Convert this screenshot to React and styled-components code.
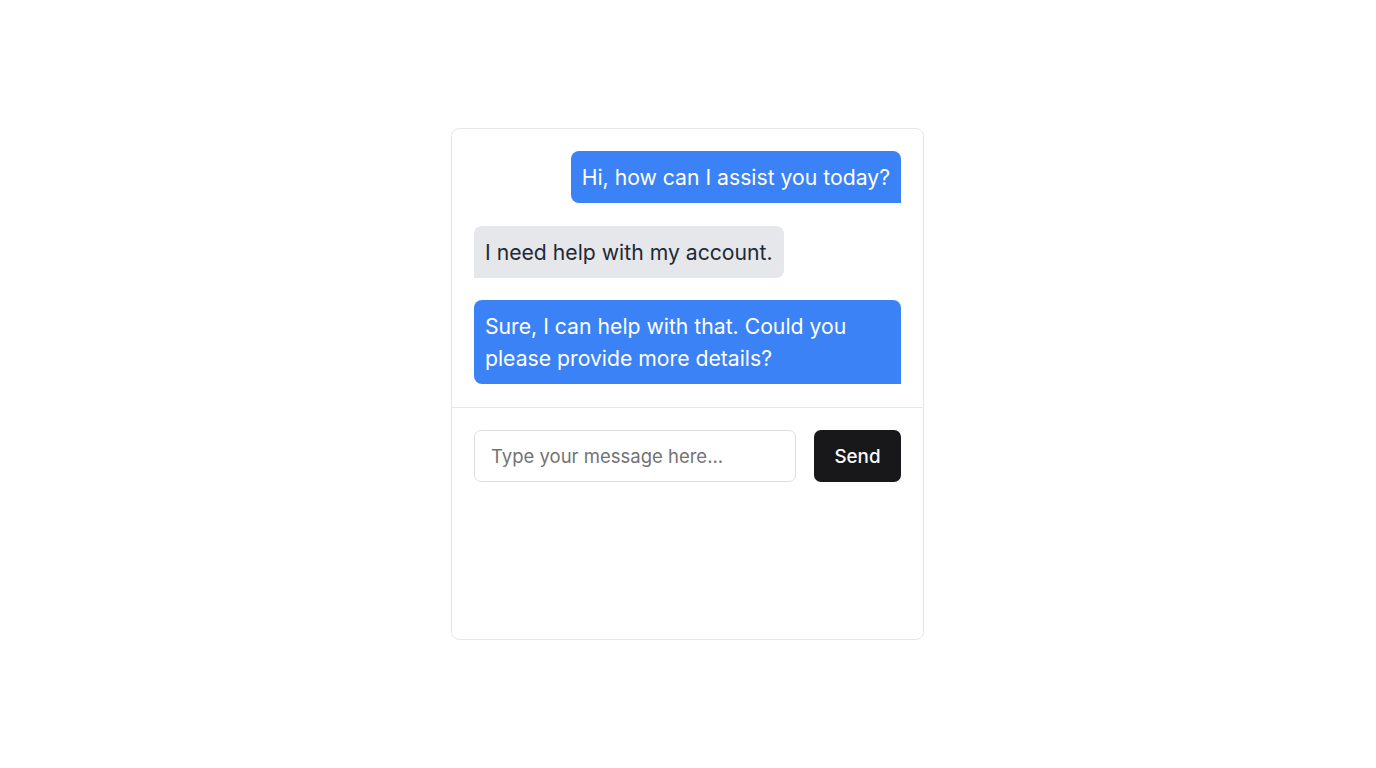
import React from "react";
import styled, { createGlobalStyle } from "styled-components";

const Global = createGlobalStyle`
  * { box-sizing: border-box; }
  html, body { margin: 0; padding: 0; background: #ffffff; }
  body { font-family: Inter, "Noto Sans", sans-serif; }
`;

const Page = styled.div`
  min-height: 100vh;
  display: flex;
  align-items: center;
  justify-content: center;
  padding-right: 1px;
`;

const Card = styled.div`
  width: 473px;
  height: 512px;
  border: 1px solid #e5e7eb;
  border-radius: 8px;
  background: #fff;
  display: flex;
  flex-direction: column;
`;

const Messages = styled.div`
  display: flex;
  flex-direction: column;
  gap: 22.5px;
  padding: 22px 22px 23px;
  border-bottom: 1px solid #e5e7eb;
`;

const Bubble = styled.div`
  align-self: ${(p) => (p.$mine ? "flex-end" : "flex-start")};
  background: ${(p) => (p.$mine ? "#3b82f6" : "#e5e7eb")};
  color: ${(p) => (p.$mine ? "#ffffff" : "#1f2937")};
  font-size: 21.2px;
  line-height: 32px;
  padding: 10px 11px;
  border-radius: 8px;
  ${(p) =>
    p.$mine ? "border-bottom-right-radius: 0;" : "border-bottom-left-radius: 0;"}
`;

const Composer = styled.div`
  display: flex;
  gap: 18px;
  padding: 22px;
`;

const Input = styled.input`
  flex: 1;
  min-width: 0;
  height: 52px;
  border: 1px solid #dedede;
  border-radius: 7px;
  padding: 0 16px;
  font-family: Inter, "Noto Sans", sans-serif;
  font-size: 18.5px;
  color: #111827;
  outline: none;
  &::placeholder { color: #737373; }
`;

const SendButton = styled.button`
  height: 52px;
  padding: 0 20.5px;
  border: none;
  border-radius: 7px;
  background: #18181b;
  color: #fafafa;
  font-family: Inter, "Noto Sans", sans-serif;
  font-size: 18.8px;
  font-weight: 500;
  cursor: pointer;
`;

export default function App() {
  return (
    <>
      <Global />
      <Page>
        <Card>
          <Messages>
            <Bubble $mine>Hi, how can I assist you today?</Bubble>
            <Bubble>I need help with my account.</Bubble>
            <Bubble $mine>
              Sure, I can help with that. Could you please provide more details?
            </Bubble>
          </Messages>
          <Composer>
            <Input placeholder="Type your message here..." />
            <SendButton>Send</SendButton>
          </Composer>
        </Card>
      </Page>
    </>
  );
}
